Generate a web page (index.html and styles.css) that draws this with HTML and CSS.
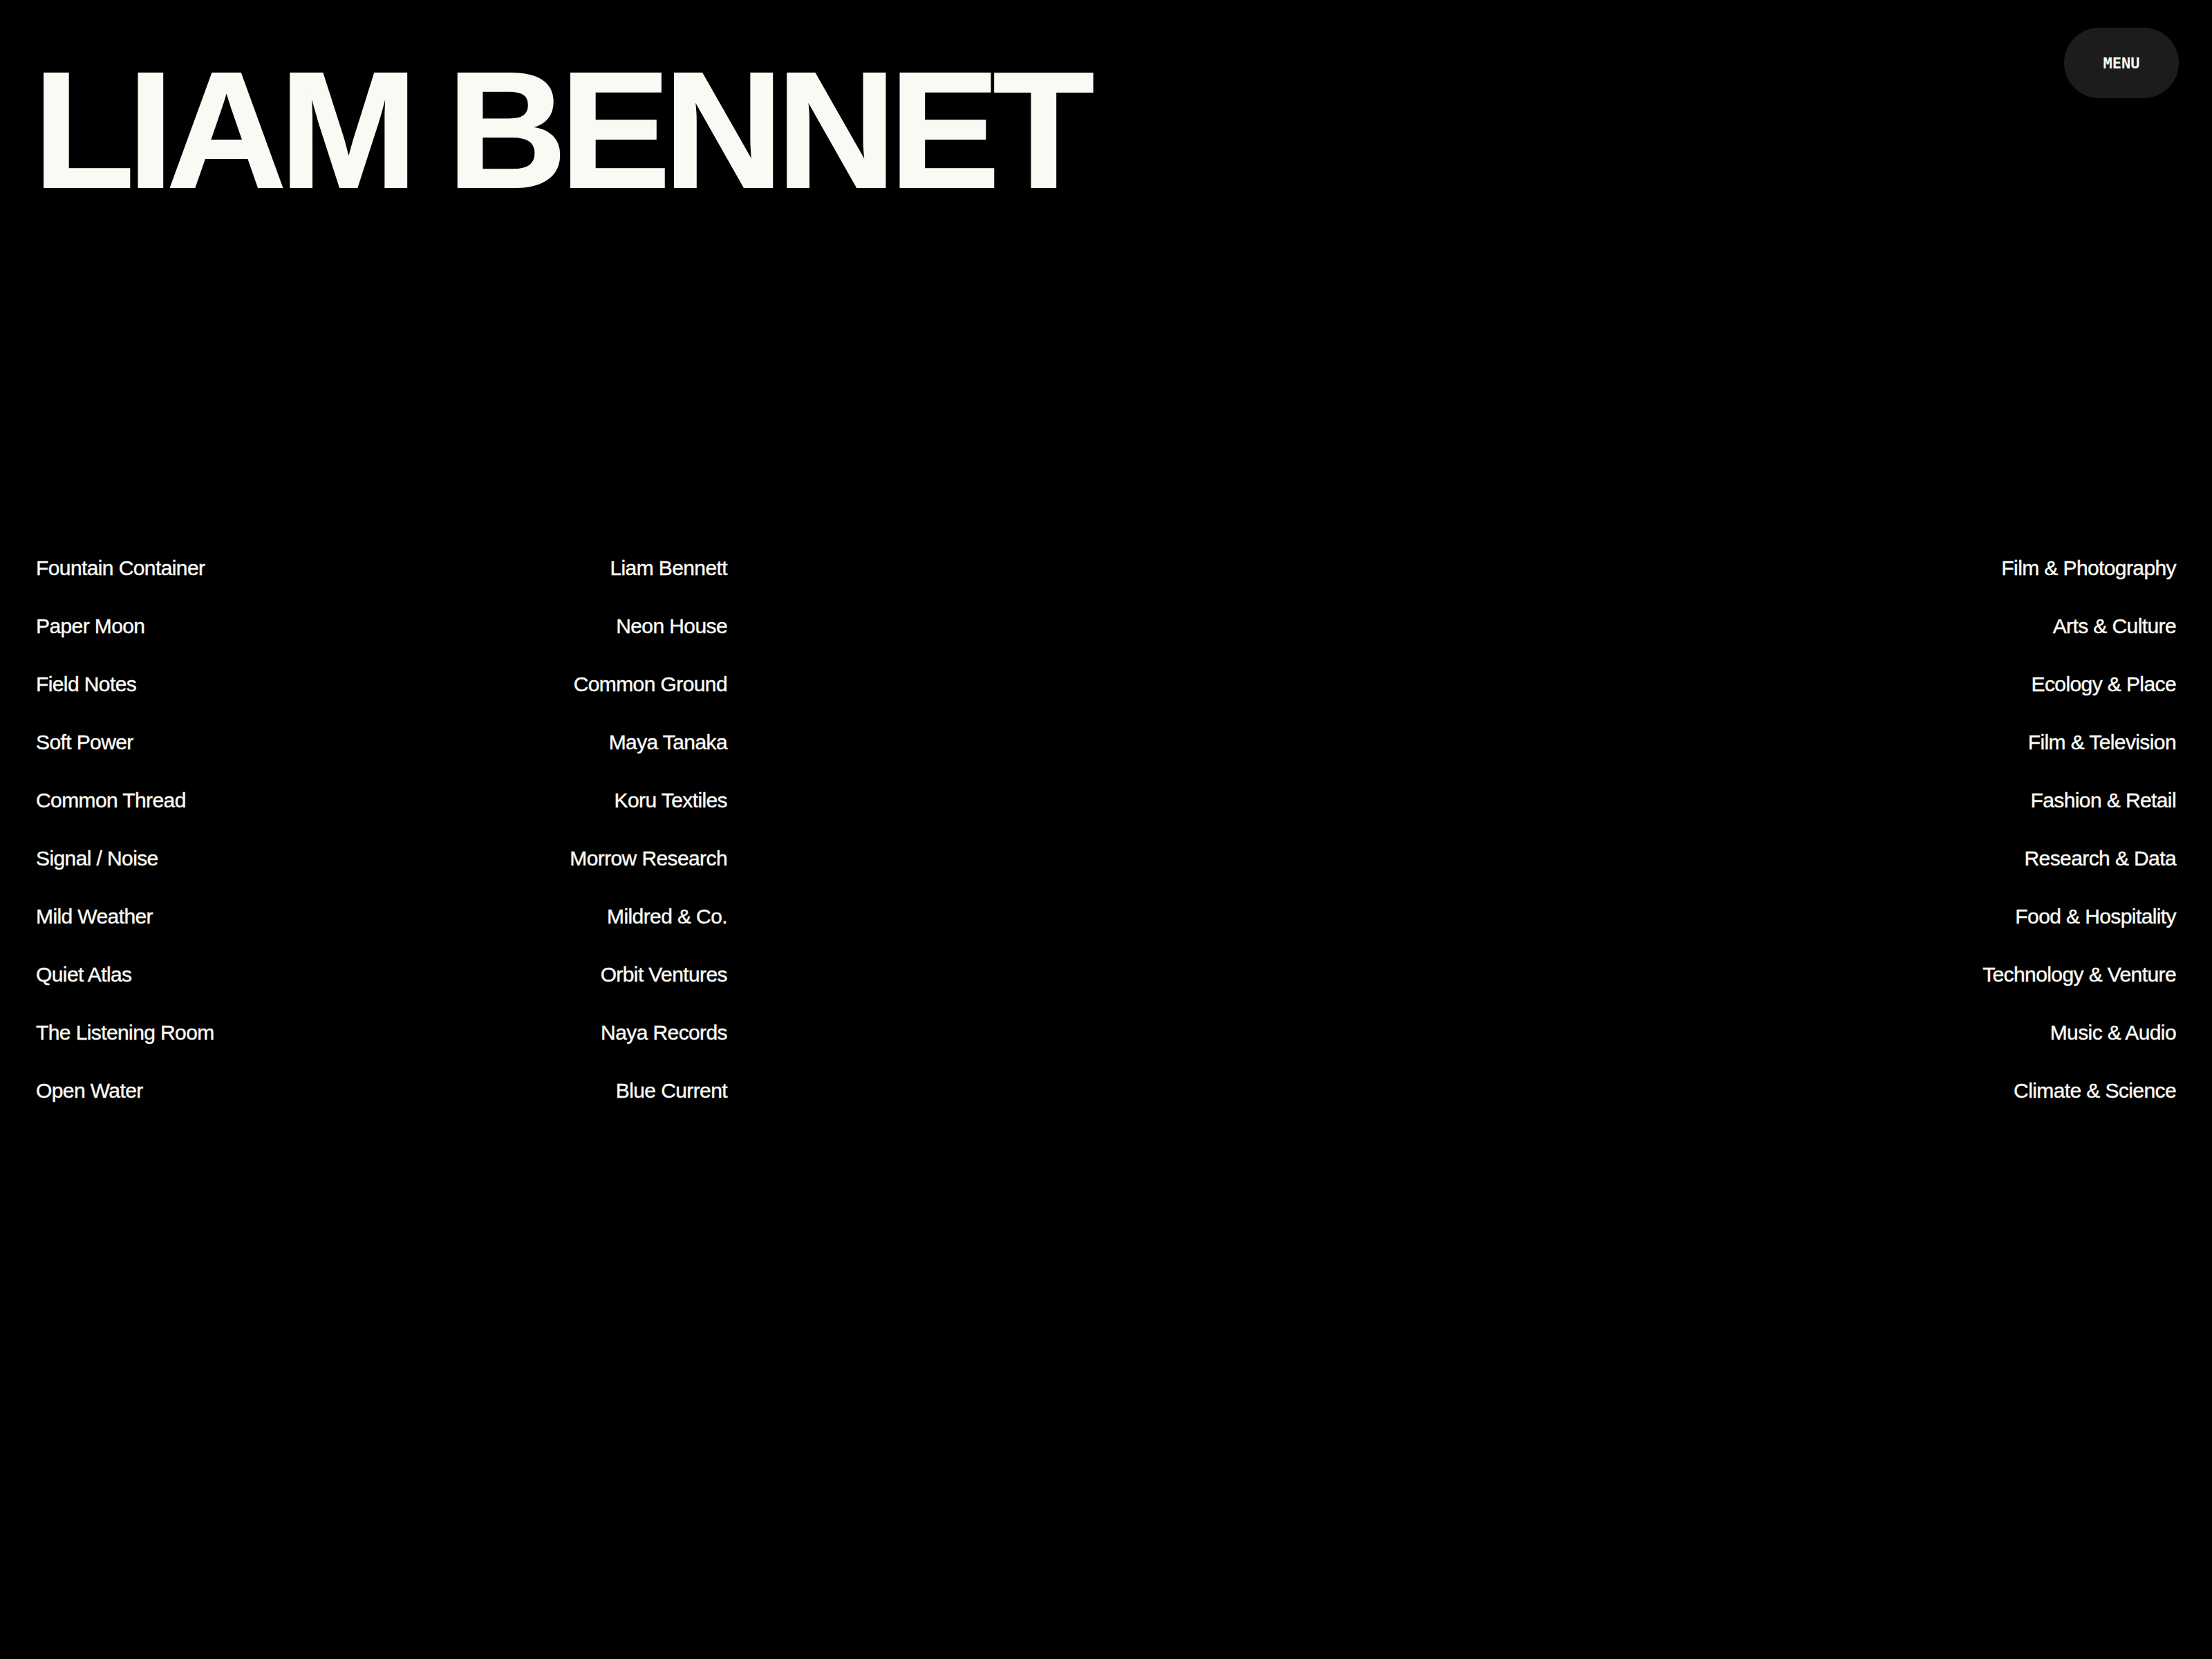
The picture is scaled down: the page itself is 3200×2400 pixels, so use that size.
FILE: index.html
```html
<!DOCTYPE html>
<html lang="en">
<head>
<meta charset="utf-8">
<title>Liam Bennet</title>
<link rel="stylesheet" href="styles.css">
</head>
<body>
<header class="site-header">
  <h1 class="site-title">LIAM BENNET</h1>
  <button class="menu-button" type="button">MENU</button>
</header>
<main class="projects">
  <ul class="project-list">
    <li class="project-row"><span class="project-name">Fountain Container</span><span class="project-client">Liam Bennett</span><span class="project-sector">Film &amp; Photography</span></li>
    <li class="project-row"><span class="project-name">Paper Moon</span><span class="project-client">Neon House</span><span class="project-sector">Arts &amp; Culture</span></li>
    <li class="project-row"><span class="project-name">Field Notes</span><span class="project-client">Common Ground</span><span class="project-sector">Ecology &amp; Place</span></li>
    <li class="project-row"><span class="project-name">Soft Power</span><span class="project-client">Maya Tanaka</span><span class="project-sector">Film &amp; Television</span></li>
    <li class="project-row"><span class="project-name">Common Thread</span><span class="project-client">Koru Textiles</span><span class="project-sector">Fashion &amp; Retail</span></li>
    <li class="project-row"><span class="project-name">Signal / Noise</span><span class="project-client">Morrow Research</span><span class="project-sector">Research &amp; Data</span></li>
    <li class="project-row"><span class="project-name">Mild Weather</span><span class="project-client">Mildred &amp; Co.</span><span class="project-sector">Food &amp; Hospitality</span></li>
    <li class="project-row"><span class="project-name">Quiet Atlas</span><span class="project-client">Orbit Ventures</span><span class="project-sector">Technology &amp; Venture</span></li>
    <li class="project-row"><span class="project-name">The Listening Room</span><span class="project-client">Naya Records</span><span class="project-sector">Music &amp; Audio</span></li>
    <li class="project-row"><span class="project-name">Open Water</span><span class="project-client">Blue Current</span><span class="project-sector">Climate &amp; Science</span></li>
  </ul>
</main>
</body>
</html>
```

FILE: styles.css
```css
html, body {
  margin: 0;
  padding: 0;
  background: #000;
}

body {
  min-height: 2400px;
  color: #fafaf6;
  font-family: "Liberation Sans", Arial, sans-serif;
}

.site-header {
  display: flex;
  justify-content: space-between;
  align-items: flex-start;
  padding: 40px 48px 0 48px;
}

.site-title {
  margin: 28px 0 0 0;
  font-family: "Liberation Sans", Arial, sans-serif;
  font-weight: 700;
  font-size: 240px;
  line-height: 240px;
  letter-spacing: -0.042em;
  word-spacing: -4px;
  color: #fafaf5;
  -webkit-text-stroke: 2px #fafaf5;
}

.menu-button {
  width: 166px;
  height: 102px;
  border: none;
  border-radius: 51px;
  background: #1c1c1c;
  color: #fafaf6;
  font-family: "DejaVu Sans Mono", "Liberation Mono", monospace;
  font-size: 22px;
  font-weight: 700;
  letter-spacing: 0;
  padding: 0;
  cursor: pointer;
}

.projects {
  margin-top: 472px;
  padding: 0 52px 0 52px;
}

.project-list {
  list-style: none;
  margin: 0;
  padding: 0;
}

.project-row {
  display: grid;
  grid-template-columns: repeat(6, 1fr);
  column-gap: 48px;
  padding: 24px 0;
  font-size: 30px;
  line-height: 36px;
  letter-spacing: -0.02em;
  white-space: nowrap;
  -webkit-text-stroke: 0.4px currentColor;
}

.project-name {
  grid-column: 1;
}

.project-client {
  grid-column: 2;
  text-align: right;
}

.project-sector {
  grid-column: 3 / 7;
  text-align: right;
}
```
